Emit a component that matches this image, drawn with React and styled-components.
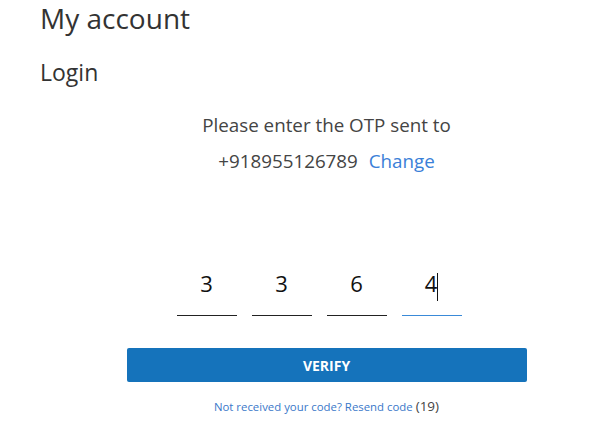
import styled, { createGlobalStyle } from "styled-components";

const GlobalStyle = createGlobalStyle`
  body {
    margin: 0;
    background: #fff;
    font-family: "Open Sans", "Noto Sans", sans-serif;
    color: #333;
  }
`;

const digits = ["3", "3", "6", "4"];

const App = () => {
  return (
    <Page>
      <GlobalStyle />
      <Title>My account</Title>
      <SubTitle>Login</SubTitle>
      <Content>
        <Prompt>Please enter the OTP sent to</Prompt>
        <Phone>
          +918955126789 <ChangeLink>Change</ChangeLink>
        </Phone>
        <OtpRow>
          {digits.map((d, i) => (
            <OtpBox key={i} active={i === digits.length - 1}>
              {d}
              {i === digits.length - 1 && <Caret />}
            </OtpBox>
          ))}
        </OtpRow>
        <VerifyButton>VERIFY</VerifyButton>
        <Resend>
          <ResendLink>Not received your code? Resend code</ResendLink>{" "}
          <Timer>(19)</Timer>
        </Resend>
      </Content>
    </Page>
  );
};

const Page = styled.div`
  padding: 0 0 0 40px;
`;

const Title = styled.h1`
  margin: 0;
  font-size: 28px;
  font-weight: 400;
  line-height: 36px;
  color: #333;
`;

const SubTitle = styled.h2`
  margin: 21px 0 0;
  font-size: 23px;
  font-weight: 400;
  line-height: 30px;
  color: #333;
`;

const Content = styled.div`
  display: flex;
  flex-direction: column;
  align-items: center;
`;

const Prompt = styled.div`
  margin-top: 20px;
  font-size: 18.8px;
  line-height: 36px;
  color: #444;
`;

const Phone = styled.div`
  font-size: 18.8px;
  line-height: 36px;
  color: #444;
`;

const ChangeLink = styled.a`
  margin-left: 6px;
  color: #3a80d8;
  cursor: pointer;
`;

const OtpRow = styled.div`
  display: flex;
  margin-top: 86px;
`;

const OtpBox = styled.div`
  width: 60px;
  height: 51px;
  margin-right: 15px;
  box-sizing: border-box;
  padding-bottom: 18px;
  display: flex;
  align-items: flex-end;
  justify-content: center;
  font-size: 22px;
  line-height: 28px;
  color: #111;
  border-bottom: 1px solid ${(p) => (p.active ? "#3a8ad8" : "#222")};
`;

const Caret = styled.span`
  display: inline-block;
  width: 1px;
  height: 28px;
  margin-bottom: -4px;
  background: #111;
`;

const VerifyButton = styled.button`
  margin-top: 32px;
  width: 400px;
  height: 34px;
  border: none;
  border-radius: 2px;
  background: #1573bb;
  color: #fff;
  font-family: "Open Sans", "Noto Sans", sans-serif;
  font-size: 14px;
  font-weight: 700;
  cursor: pointer;
`;

const Resend = styled.div`
  margin-top: 15px;
  font-size: 11.4px;
`;

const ResendLink = styled.a`
  color: #3a78c9;
  cursor: pointer;
`;

const Timer = styled.span`
  font-size: 13.5px;
  color: #444;
`;

export default App;
